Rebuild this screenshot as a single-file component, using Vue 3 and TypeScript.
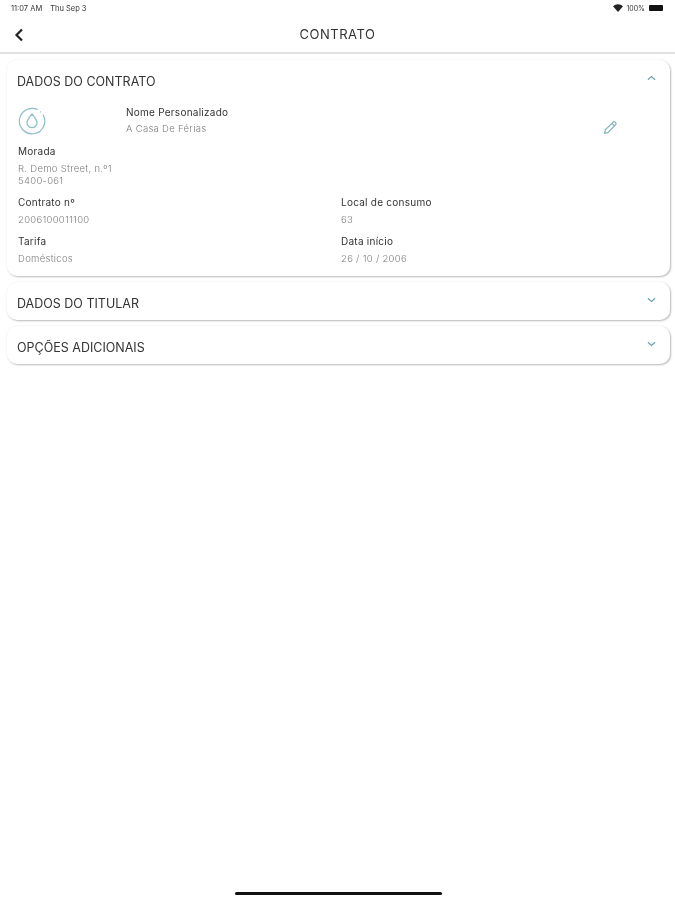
<template>
  <div class="screen">
    <div class="status-bar">
      <div class="status-left">
        <span>11:07 AM</span>
        <span>Thu Sep 3</span>
      </div>
      <div class="status-right">
        <svg width="10" height="8" viewBox="0 0 10 8">
          <path d="M0 2.3C2.8-.4 7.2-.4 10 2.3L5 8z" fill="#222" />
        </svg>
        <span>100%</span>
        <span class="battery"><i></i></span>
      </div>
    </div>

    <header class="nav">
      <button class="back" aria-label="Voltar">
        <svg width="10" height="14" viewBox="0 0 10 14" fill="none">
          <path d="M8 1.5 2.5 7 8 12.5" stroke="#222" stroke-width="2.2" />
        </svg>
      </button>
      <h1>CONTRATO</h1>
    </header>

    <main class="cards">
      <section class="card">
        <div class="card-head">
          <h2>DADOS DO CONTRATO</h2>
          <svg class="chev" width="9" height="6" viewBox="0 0 10 6" fill="none">
            <path d="M1 5 5 1.5 9 5" stroke="#6fa5ad" stroke-width="1.4" />
          </svg>
        </div>

        <div class="intro">
          <div class="drop">
            <svg width="28" height="28" viewBox="0 0 28 28" fill="none" stroke="#8dbec6">
              <path d="M19.5 2.6A12.7 12.7 0 1 0 25 7.6" stroke-width="1.2" />
              <circle cx="22.6" cy="4.9" r=".6" fill="#8dbec6" stroke="none" />
              <path d="M14 7c2.8 3.3 5 5.8 5 8.7a5 5 0 0 1-10 0c0-2.9 2.2-5.4 5-8.7z" stroke-width="1.3" />
            </svg>
          </div>
          <div class="field name">
            <label>Nome Personalizado</label>
            <p>A Casa De Férias</p>
          </div>
          <svg class="edit" width="15" height="15" viewBox="0 0 15 15" fill="none" stroke="#7fb3bc" stroke-width="1.2">
            <path d="M1.6 13.3 2.3 9.9 9.9 2.3a1.7 1.7 0 0 1 2.6 2.6l-7.6 7.7z" />
            <path d="M8.9 3.3 11.6 6" />
          </svg>
        </div>

        <div class="field address">
          <label>Morada</label>
          <p>R. Demo Street, n.º1<br />5400-061</p>
        </div>

        <div class="grid">
          <div v-for="f in fields" :key="f.label" class="field">
            <label>{{ f.label }}</label>
            <p>{{ f.value }}</p>
          </div>
        </div>
      </section>

      <section v-for="title in closedCards" :key="title" class="card">
        <div class="card-head">
          <h2>{{ title }}</h2>
          <svg class="chev" width="9" height="6" viewBox="0 0 10 6" fill="none">
            <path d="M1 1 5 4.5 9 1" stroke="#6fa5ad" stroke-width="1.4" />
          </svg>
        </div>
      </section>
    </main>

    <div class="home-indicator"></div>
  </div>
</template>

<script setup lang="ts">
const fields = [
  { label: 'Contrato nº', value: '2006100011100' },
  { label: 'Local de consumo', value: '63' },
  { label: 'Tarifa', value: 'Domésticos' },
  { label: 'Data início', value: '26 / 10 / 2006' },
]

const closedCards = ['DADOS DO TITULAR', 'OPÇÕES ADICIONAIS']
</script>

<style>
body {
  background: #fff;
}
</style>

<style scoped>
.screen {
  position: relative;
  width: 675px;
  height: 900px;
  overflow: hidden;
  background: #fff;
  color: #2c2c2c;
  font-family: Inter, 'Noto Sans', sans-serif;
  filter: blur(0.35px);
}

.status-bar {
  height: 14px;
  padding: 1px 11px 0;
  display: flex;
  justify-content: space-between;
  align-items: center;
  font-size: 7px;
  color: #333;
}

.status-left {
  display: flex;
  gap: 8px;
  font-size: 7.5px;
}

.status-right {
  display: flex;
  align-items: center;
  gap: 3px;
}

.battery {
  width: 15px;
  height: 6px;
  display: block;
  margin-left: 1px;
}

.battery i {
  display: block;
  width: 14px;
  height: 6px;
  border-radius: 1px;
  background: #111;
}

.nav {
  position: relative;
  height: 39px;
  padding-top: 1px;
  box-sizing: border-box;
  display: flex;
  align-items: center;
  justify-content: center;
  border-bottom: 2px solid #e2e2e2;
}

.nav h1 {
  margin: 0;
  font-size: 13px;
  font-weight: 400;
  letter-spacing: 0.5px;
  color: #333;
}

.back {
  position: absolute;
  left: 14px;
  top: 13px;
  padding: 0;
  border: 0;
  background: none;
  line-height: 0;
}

.cards {
  padding: 6px 5px 0 7px;
  display: flex;
  flex-direction: column;
  gap: 6px;
}

.card {
  border-radius: 10px;
  background: #fff;
  box-shadow: 1px 1px 2px rgba(0, 0, 0, 0.26), 0 0 3px rgba(0, 0, 0, 0.05);
}

.card-head {
  height: 38px;
  padding: 0 14px 0 10px;
  display: flex;
  align-items: center;
  justify-content: space-between;
}

.card-head h2 {
  margin: 0;
  padding-top: 4px;
  font-size: 12.5px;
  font-weight: 400;
  color: #333;
}

.chev {
  margin-bottom: 2px;
}

.intro {
  position: relative;
  height: 45px;
  padding-left: 11px;
  display: flex;
  align-items: flex-start;
}

.drop {
  width: 108px;
  padding-top: 9px;
  line-height: 0;
}

.name {
  padding-top: 8px;
}

.edit {
  position: absolute;
  left: 596px;
  top: 22px;
}

.field label {
  display: block;
  font-size: 10px;
  line-height: 12px;
  letter-spacing: 0.25px;
  color: #333;
}

.field p {
  margin: 6px 0 0;
  font-size: 9.5px;
  font-weight: 300;
  line-height: 11.5px;
  letter-spacing: 0.3px;
  color: #7c7c7c;
}

.name p {
  margin-top: 5px;
}

.address {
  padding: 2px 11px 0;
}

.grid {
  display: grid;
  grid-template-columns: 323px 1fr;
  row-gap: 9px;
  padding: 10px 11px 12px;
}

.home-indicator {
  position: absolute;
  left: 235px;
  top: 892px;
  width: 207px;
  height: 3px;
  border-radius: 2px;
  background: #111;
}
</style>
